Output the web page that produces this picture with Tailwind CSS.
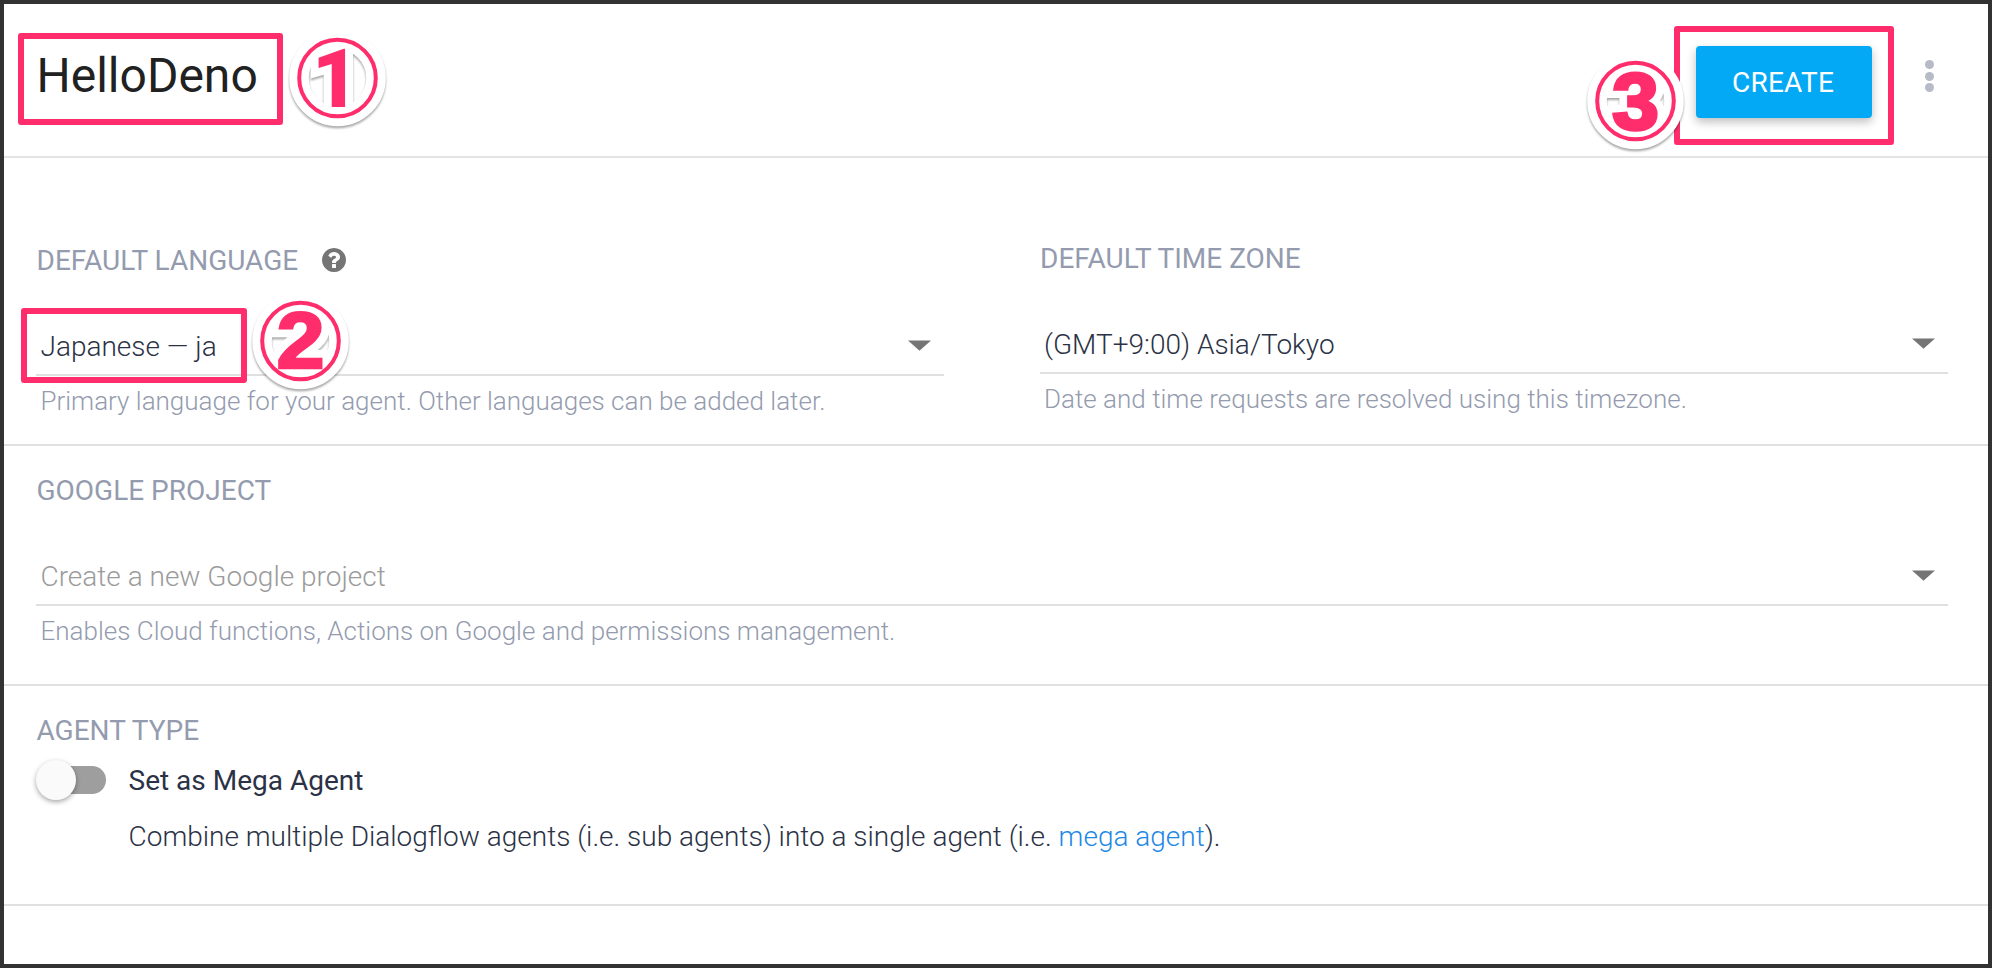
<!DOCTYPE html>
<html lang="en">
<head>
<meta charset="utf-8">
<title>HelloDeno</title>
<script src="https://cdn.jsdelivr.net/npm/@tailwindcss/browser@4"></script>
</head>
<body class="font-['Roboto',sans-serif]">
<div class="relative w-[1992px] h-[968px] overflow-hidden border-4 border-[#333232] bg-white text-[28px] leading-8 text-[#2b3245]">
  <header class="flex h-[154px] items-start justify-between border-b-2 border-[#e4e4e4] pl-[32.500px] pr-[54px]">
    <h1 class="mt-[44px] text-[48px] leading-[56px] text-[#212121]">HelloDeno</h1>
    <div class="flex items-start">
      <button class="mt-[42px] h-[72px] w-[176px] rounded-[4px] bg-[#03a9f4] pt-0.5 pr-0.5 text-[28px] leading-8 tracking-[0.28px] text-white shadow-[0_4px_10px_rgba(0,0,0,0.26)]">CREATE</button>
      <div class="mt-[56px] ml-[53px] flex flex-col gap-[2.5px]">
        <i class="block size-[9px] rounded-full bg-[#b7bbc8]"></i>
        <i class="block size-[9px] rounded-full bg-[#b7bbc8]"></i>
        <i class="block size-[9px] rounded-full bg-[#b7bbc8]"></i>
      </div>
    </div>
  </header>

  <section class="flex h-[288px] gap-24 border-b-2 border-[#e0e0e0] px-8 pr-10">
    <div class="flex-1 pt-[87px]">
      <div class="flex items-center">
        <h2 class="pl-[0.5px] text-[#949bae]">DEFAULT LANGUAGE</h2>
        <svg class="-mt-0.5 ml-[23.500px] size-6" viewBox="128 128 1536 1536" fill="#757575"><path d="M1024 1376v-192q0-14-9-23t-23-9h-192q-14 0-23 9t-9 23v192q0 14 9 23t23 9h192q14 0 23-9t9-23zM1280 704q0-88-55.5-163t-138.5-116-170-41q-243 0-371 213-15 24 8 42l132 100q7 6 19 6 16 0 25-12 53-68 86-92 34-24 86-24 48 0 85.500 26t37.500 59q0 38-20 61t-68 45q-63 28-115.500 86.500t-52.500 125.500v36q0 14 9 23t23 9h192q14 0 23-9t9-23q0-19 21.500-49.500t54.500-49.500q32-18 49-28.500t46-35 44.500-48 28-60.500 12.500-81zM1664 896q0 209-103 385.500t-279.500 279.500-385.500 103-385.500-103-279.500-279.500-103-385.500 103-385.500 279.500-279.500 385.500-103 385.500 103 279.500 279.500 103 385.500z"/></svg>
      </div>
      <div class="mt-[54px] flex h-[45px] items-start justify-between border-b-2 border-[#e0e0e0] pl-[4.500px] pr-[13.500px]">
        <span class="font-light">Japanese — ja</span>
        <svg class="mt-[9px] h-[11px] w-[23px]" viewBox="0 0 23 11"><path d="M0 .5h23L11.500 10.700z" fill="#757575"/></svg>
      </div>
      <p class="mt-[9px] pl-[4.500px] text-[26px] leading-8 font-light text-[#949bae]">Primary language for your agent. Other languages can be added later.</p>
    </div>
    <div class="flex-1 pt-[85px]">
      <h2 class="text-[#949bae]">DEFAULT TIME ZONE</h2>
      <div class="mt-[54px] flex h-[45px] items-start justify-between border-b-2 border-[#e0e0e0] pl-1 pr-[13.500px]">
        <span class="font-light">(GMT+9:00) Asia/Tokyo</span>
        <svg class="mt-[9px] h-[11px] w-[23px]" viewBox="0 0 23 11"><path d="M0 .5h23L11.500 10.700z" fill="#757575"/></svg>
      </div>
      <p class="mt-[9px] pl-1 text-[26px] leading-8 font-light text-[#949bae]">Date and time requests are resolved using this timezone.</p>
    </div>
  </section>

  <section class="h-[240px] border-b-2 border-[#e0e0e0] pl-8 pr-10 pt-[29px]">
    <h2 class="pl-[0.5px] text-[#949bae]">GOOGLE PROJECT</h2>
    <div class="mt-[54px] flex h-[45px] items-start justify-between border-b-2 border-[#e0e0e0] pl-[4.500px] pr-[13.500px]">
      <span class="font-light text-[#9b9b9b]">Create a new Google project</span>
      <svg class="mt-[9px] h-[11px] w-[23px]" viewBox="0 0 23 11"><path d="M0 .5h23L11.500 10.700z" fill="#757575"/></svg>
    </div>
    <p class="mt-[9px] pl-[4.500px] text-[26px] leading-8 font-light text-[#949bae]">Enables Cloud functions, Actions on Google and permissions management.</p>
  </section>

  <section class="h-[220px] border-b-2 border-[#e0e0e0] pl-8 pt-[29px]">
    <h2 class="pl-[0.5px] text-[#949bae]">AGENT TYPE</h2>
    <div class="mt-[13px] flex items-start">
      <div class="flex h-10 w-[70px] items-center">
        <div class="ml-0.5 flex h-7 w-[68px] items-center rounded-full bg-[#9e9e9e]">
          <div class="-ml-0.5 size-10 rounded-full bg-[#fafafa] shadow-[0_2px_5px_rgba(0,0,0,0.35)]"></div>
        </div>
      </div>
      <div class="ml-[22.500px] pt-[5px]">
        <div>Set as Mega Agent</div>
        <p class="mt-6 font-light">Combine multiple Dialogflow agents (i.e. sub agents) into a single agent (i.e. <a class="text-[#1e88e5]">mega agent</a>).</p>
      </div>
    </div>
  </section>

  <!-- Step annotations laid over the form -->
  <div class="absolute left-[14px] top-[29px] h-[92px] w-[265px] rounded-[3px] border-6 border-[#ff2d6c]"></div>
  <div class="absolute left-[17px] top-[304px] h-[75px] w-[226px] rounded-[3px] border-6 border-[#ff2d6c]"></div>
  <div class="absolute left-[1670px] top-[22px] h-[119px] w-[220px] rounded-[3px] border-6 border-[#ff2d6c]"></div>

  <svg class="absolute left-[273px] top-[14px] size-[120px]" viewBox="-60.500 -60 120 120">
    <g class="drop-shadow-[0_2px_1px_rgba(0,0,0,0.35)]">
      <circle r="38.500" fill="none" stroke="#fff" stroke-width="19.500"/>
      <text x="-2" y="29" text-anchor="middle" font-family="Roboto" font-weight="900" font-size="81" fill="#fff" stroke="#fff" stroke-width="16">1</text>
    </g>
    <circle r="38.300" fill="none" stroke="#ff2d6c" stroke-width="4"/>
    <text x="-2" y="29" text-anchor="middle" font-family="Roboto" font-weight="900" font-size="81" fill="#ff2d6c">1</text>
  </svg>
  <svg class="absolute left-[236px] top-[277px] size-[120px]" viewBox="-60.500 -60 120 120">
    <g class="drop-shadow-[0_2px_1px_rgba(0,0,0,0.35)]">
      <circle r="38.500" fill="none" stroke="#fff" stroke-width="19.500"/>
      <text y="27" transform="scale(1.080 1)" text-anchor="middle" font-family="Liberation Sans" font-weight="700" font-size="80" fill="#fff" stroke="#fff" stroke-width="18">2</text>
    </g>
    <circle r="38.300" fill="none" stroke="#ff2d6c" stroke-width="4"/>
    <text y="27" transform="scale(1.080 1)" text-anchor="middle" font-family="Liberation Sans" font-weight="700" font-size="80" fill="#ff2d6c" stroke="#ff2d6c" stroke-width="2.500">2</text>
  </svg>
  <svg class="absolute left-[1571px] top-[37px] size-[120px]" viewBox="-60.500 -60 120 120">
    <g class="drop-shadow-[0_2px_1px_rgba(0,0,0,0.35)]">
      <circle r="38.500" fill="none" stroke="#fff" stroke-width="19.500"/>
      <text y="27.500" transform="scale(1.060 1)" text-anchor="middle" font-family="Liberation Sans" font-weight="700" font-size="79" fill="#fff" stroke="#fff" stroke-width="18">3</text>
    </g>
    <circle r="38.300" fill="none" stroke="#ff2d6c" stroke-width="4"/>
    <text y="27.500" transform="scale(1.060 1)" text-anchor="middle" font-family="Liberation Sans" font-weight="700" font-size="79" fill="#ff2d6c" stroke="#ff2d6c" stroke-width="3.500">3</text>
  </svg>
</div>
</body>
</html>
